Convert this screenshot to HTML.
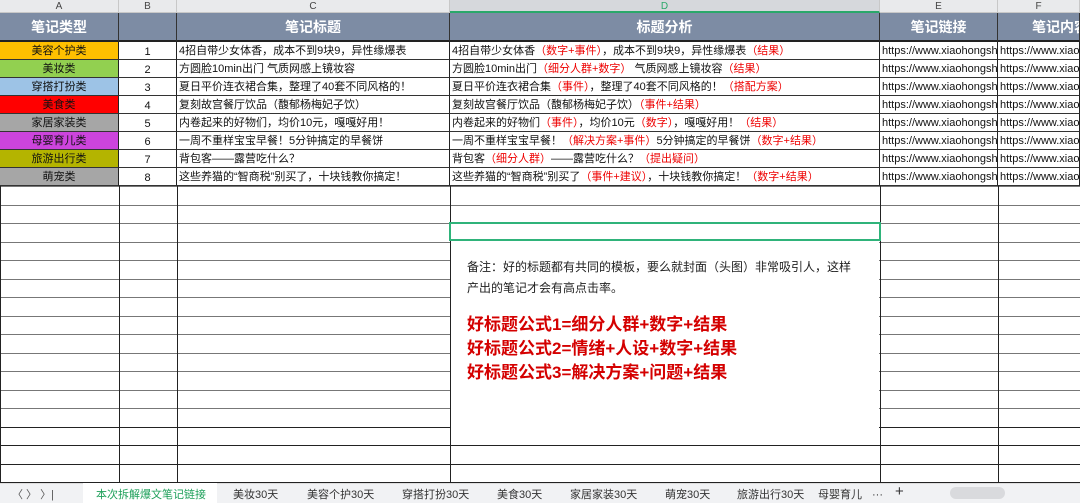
<!DOCTYPE html>
<html><head><meta charset="utf-8"><style>
*{margin:0;padding:0;box-sizing:border-box}
body{width:1080px;height:503px;overflow:hidden;background:#fff;font-family:"Liberation Sans","Noto Sans CJK SC",sans-serif;position:relative}
.a{position:absolute}
.hdr{top:0;height:13px;background:#e9eaec;border-bottom:1px solid #c8c8c8;font-size:10px;color:#444;text-align:center;line-height:13px;border-right:1px solid #c8c8c8}
.tt{top:13px;height:29px;background:#7d8ca4;color:#fff;font-size:14px;font-weight:bold;text-align:center;line-height:29px;border-right:1px solid #333;border-bottom:2px solid #222}
.c{height:18px;font-size:11px;line-height:18px;white-space:nowrap;overflow:hidden;color:#111;border-right:1px solid #222;border-bottom:1px solid #333;padding-left:2px}
.r{color:#e00}
.cat{text-align:center;padding:0;font-weight:normal}
.hl{position:absolute;left:0;width:1080px;height:0;border-top:1px solid #777}
.vl{position:absolute;top:186px;height:297px;width:0;border-left:1px solid #222}
.tab{position:absolute;top:489px;font-size:11px;color:#333;line-height:12px}
</style></head><body>
<div class="a hdr" style="left:0;width:119px">A</div>
<div class="a hdr" style="left:119px;width:58px">B</div>
<div class="a hdr" style="left:177px;width:273px">C</div>
<div class="a hdr" style="left:450px;width:430px;background:#d6d8dc;color:#2aa86a;border-bottom:2px solid #2aa86a">D</div>
<div class="a hdr" style="left:880px;width:118px">E</div>
<div class="a hdr" style="left:998px;width:82px">F</div>
<div class="a tt" style="left:0;width:119px">笔记类型</div>
<div class="a tt" style="left:119px;width:58px"></div>
<div class="a tt" style="left:177px;width:273px">笔记标题</div>
<div class="a tt" style="left:450px;width:430px">标题分析</div>
<div class="a tt" style="left:880px;width:118px">笔记链接</div>
<div class="a tt" style="left:998px;width:82px;text-align:left;padding-left:34px;white-space:nowrap;overflow:hidden">笔记内容</div>

<div id="rows"></div>
<script>
var cats=[["美容个护类","#ffc000"],["美妆类","#92d050"],["穿搭打扮类","#9dc3e6"],["美食类","#ff0000"],["家居家装类","#a6a6a6"],["母婴育儿类","#cc44dd"],["旅游出行类","#b4b400"],["萌宠类","#a6a6a6"]];
var t=["4招自带少女体香，成本不到9块9，异性缘爆表","方圆脸10min出门 气质网感上镜妆容","夏日平价连衣裙合集，整理了40套不同风格的！","复刻故宫餐厅饮品（馥郁杨梅妃子饮）","内卷起来的好物们，均价10元，嘎嘎好用！","一周不重样宝宝早餐！5分钟搞定的早餐饼","背包客——露营吃什么？","这些养猫的“智商税”别买了，十块钱教你搞定！"];
var d=['4招自带少女体香<span class=r>（数字+事件）</span>，成本不到9块9，异性缘爆表<span class=r>（结果）</span>',
'方圆脸10min出门<span class=r>（细分人群+数字）</span> 气质网感上镜妆容<span class=r>（结果）</span>',
'夏日平价连衣裙合集<span class=r>（事件）</span>，整理了40套不同风格的！<span class=r>（搭配方案）</span>',
'复刻故宫餐厅饮品（馥郁杨梅妃子饮）<span class=r>（事件+结果）</span>',
'内卷起来的好物们<span class=r>（事件）</span>，均价10元<span class=r>（数字）</span>，嘎嘎好用！<span class=r>（结果）</span>',
'一周不重样宝宝早餐！<span class=r>（解决方案+事件）</span>5分钟搞定的早餐饼<span class=r>（数字+结果）</span>',
'背包客<span class=r>（细分人群）</span>——露营吃什么？<span class=r>（提出疑问）</span>',
'这些养猫的“智商税”别买了<span class=r>（事件+建议）</span>，十块钱教你搞定！<span class=r>（数字+结果）</span>'];
var h='';
for(var i=0;i<8;i++){var y=42+i*18;
h+='<div class="a c cat" style="top:'+y+'px;left:0;width:119px;background:'+cats[i][1]+'">'+cats[i][0]+'</div>';
h+='<div class="a c" style="top:'+y+'px;left:119px;width:58px;text-align:center;padding:0;line-height:21px">'+(i+1)+'</div>';
h+='<div class="a c" style="top:'+y+'px;left:177px;width:273px">'+t[i]+'</div>';
h+='<div class="a c" style="top:'+y+'px;left:450px;width:430px">'+d[i]+'</div>';
h+='<div class="a c" style="top:'+y+'px;left:880px;width:118px">https://www.xiaohongshu.com/discovery</div>';
h+='<div class="a c" style="top:'+y+'px;left:998px;width:82px">https://www.xiaohongshu.com/discovery</div>';}
for(var k=0;k<17;k++){h+='<div class="hl" style="top:'+(186+k*18.5)+'px;border-color:'+(k>=13?'#222':'#777')+'"></div>';}
[0,119,177,450,880,998].forEach(function(x){h+='<div class="vl" style="left:'+x+'px"></div>';});
document.getElementById('rows').innerHTML=h;
</script>
<div class="a" style="left:449px;top:222px;width:432px;height:19px;border:2px solid #2fb37a"></div>
<div class="a" style="left:451px;top:241px;width:428px;height:200px;background:#fff">
<div style="position:absolute;left:16px;top:16px;width:410px;font-size:12px;line-height:21px;color:#222">备注：好的标题都有共同的模板，要么就封面（头图）非常吸引人，这样<br>产出的笔记才会有高点击率。</div>
<div style="position:absolute;left:16px;top:72px;font-size:17px;line-height:24px;font-weight:bold;color:#d40000">好标题公式1=细分人群+数字+结果<br>好标题公式2=情绪+人设+数字+结果<br>好标题公式3=解决方案+问题+结果</div>
</div>
<div class="a" style="left:0;top:483px;width:1080px;height:20px;background:#f1f2f4;border-top:1px solid #ddd"></div>
<div class="tab" style="left:12px;color:#555">〈 〉 〉|</div>
<div class="a" style="left:83px;top:483px;width:134px;height:20px;background:#fff"></div>
<div class="tab" style="left:96px;color:#1ea05a">本次拆解爆文笔记链接</div>
<div class="tab" style="left:233px">美妆30天</div>
<div class="tab" style="left:307px">美容个护30天</div>
<div class="tab" style="left:402px">穿搭打扮30天</div>
<div class="tab" style="left:497px">美食30天</div>
<div class="tab" style="left:570px">家居家装30天</div>
<div class="tab" style="left:665px">萌宠30天</div>
<div class="tab" style="left:737px">旅游出行30天</div>
<div class="tab" style="left:818px">母婴育儿</div>
<div class="tab" style="left:872px">···</div>
<div class="tab" style="left:895px;font-size:15px;top:486px">+</div>
<div class="a" style="left:950px;top:487px;width:55px;height:12px;background:#d9dadd;border-radius:6px"></div>
</body></html>
